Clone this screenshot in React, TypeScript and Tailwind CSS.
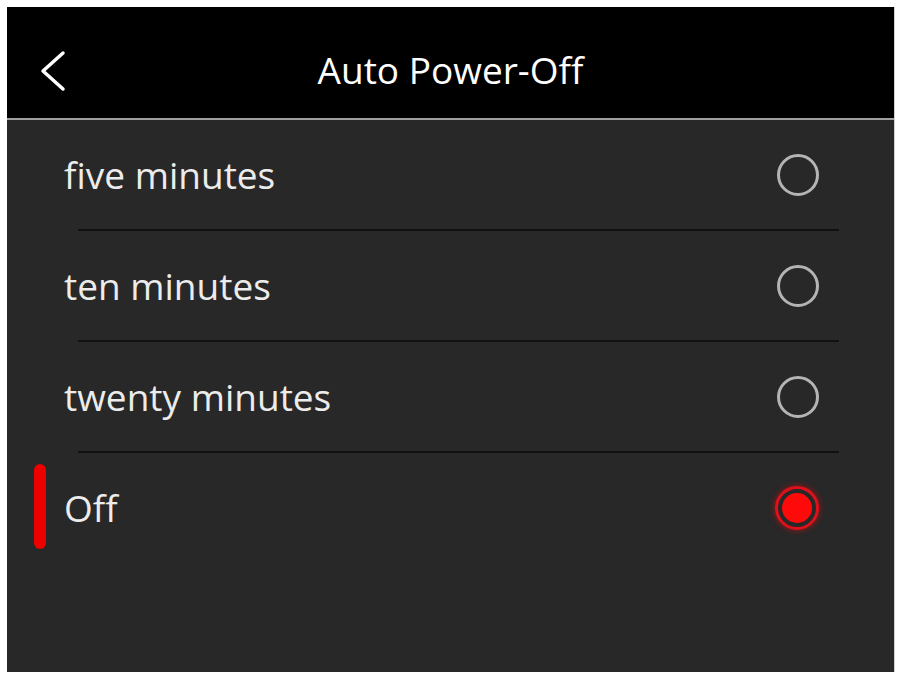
import React, { useState } from 'react';

const options = ['five minutes', 'ten minutes', 'twenty minutes', 'Off'];

const Radio: React.FC<{ checked: boolean }> = ({ checked }) => {
  if (checked) {
    return (
      <div className="w-[44px] h-[44px] rounded-full border-[3px] border-[#e0101a] flex items-center justify-center shadow-[0_0_6px_rgba(255,0,0,0.6)]">
        <div className="w-[30px] h-[30px] rounded-full bg-[#ff0a0a]" />
      </div>
    );
  }
  return <div className="w-[42px] h-[42px] rounded-full border-[3px] border-[#b4b4b4]" />;
};

export default function App() {
  const [selected, setSelected] = useState(3);

  return (
    <div className="w-[898px] h-[676px] bg-white pl-[7px] pt-[7px] pr-[3px] pb-[4px] font-['Open_Sans',sans-serif]">
      <div className="h-full flex flex-col bg-[#282828] border-r border-[#d0d0d0]">
        {/* header */}
        <div className="h-[111px] bg-black relative flex items-center justify-center pt-[13px] shrink-0">
          <button className="absolute left-[26px] top-[38px] w-[40px] h-[52px] flex items-center justify-center">
            <svg width="30" height="42" viewBox="0 0 30 42" fill="none">
              <path d="M25 3 L5 21 L25 39" stroke="white" strokeWidth="3.5" strokeLinecap="round" strokeLinejoin="round" />
            </svg>
          </button>
          <h1 className="text-white text-[37px] leading-none">Auto Power-Off</h1>
        </div>
        <div className="h-[2px] bg-[#a0a0a0] shrink-0" />

        {options.map((label, i) => (
          <div key={label}>
            <div
              onClick={() => setSelected(i)}
              className="relative h-[109px] flex items-center justify-between pl-[57px] pr-[75px] cursor-pointer"
            >
              {selected === i && (
                <div className="absolute left-[27px] top-[11px] w-[12px] h-[85px] rounded-full bg-[#ee0000]" />
              )}
              <span className="text-[#ececec] text-[37px] leading-none">{label}</span>
              <Radio checked={selected === i} />
            </div>
            {i < options.length - 1 && <div className="h-[2px] bg-[#111111] ml-[71px] mr-[55px]" />}
          </div>
        ))}
      </div>
    </div>
  );
}
